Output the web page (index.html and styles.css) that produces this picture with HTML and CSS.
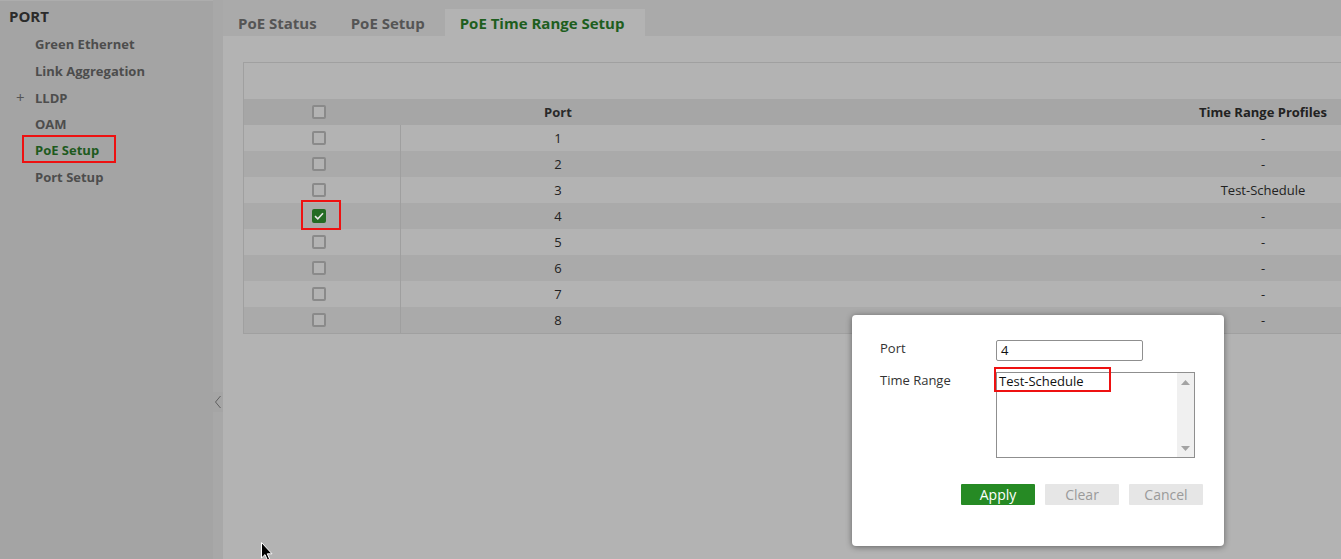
FILE: index.html
```html
<!DOCTYPE html>
<html>
<head>
<meta charset="utf-8">
<link rel="stylesheet" href="styles.css">
</head>
<body>
<div class="app">
  <aside class="sidebar">
    <div class="side-title">PORT</div>
    <ul class="side-list">
      <li class="side-item">Green Ethernet</li>
      <li class="side-item">Link Aggregation</li>
      <li class="side-item has-plus"><span class="plus">+</span>LLDP</li>
      <li class="side-item">OAM</li>
      <li class="side-item"><span class="side-active">PoE Setup</span></li>
      <li class="side-item">Port Setup</li>
    </ul>
  </aside>
  <div class="collapse">
    <div class="collapse-btn">
      <svg width="8" height="14" viewBox="0 0 8 14"><path d="M6.5 1 L1.5 7 L6.5 13" fill="none" stroke="#5f5f5f" stroke-width="1"/></svg>
    </div>
  </div>
  <main class="main">
    <nav class="tabs">
      <div class="tab">PoE Status</div>
      <div class="tab">PoE Setup</div>
      <div class="tab tab-active">PoE Time Range Setup</div>
    </nav>
    <section class="panel">
      <div class="table">
        <div class="toolbar"></div>
        <div class="row head">
          <div class="c-chk"><span class="chk"></span></div>
          <div class="c-port">Port</div>
          <div class="c-fill"></div>
          <div class="c-prof">Time Range Profiles</div>
        </div>
        <div class="row odd"><div class="c-chk sep"><span class="chk"></span></div><div class="c-port">1</div><div class="c-fill"></div><div class="c-prof">-</div></div>
        <div class="row even"><div class="c-chk sep"><span class="chk"></span></div><div class="c-port">2</div><div class="c-fill"></div><div class="c-prof">-</div></div>
        <div class="row odd"><div class="c-chk sep"><span class="chk"></span></div><div class="c-port">3</div><div class="c-fill"></div><div class="c-prof">Test-Schedule</div></div>
        <div class="row even"><div class="c-chk sep"><span class="chk checked"><svg width="10" height="8" viewBox="0 0 10 8"><path d="M1 4.2 L3.8 6.8 L9 1.2" fill="none" stroke="#e8e8e8" stroke-width="1.6"/></svg></span><span class="mark mark-chk"></span></div><div class="c-port">4</div><div class="c-fill"></div><div class="c-prof">-</div></div>
        <div class="row odd"><div class="c-chk sep"><span class="chk"></span></div><div class="c-port">5</div><div class="c-fill"></div><div class="c-prof">-</div></div>
        <div class="row even"><div class="c-chk sep"><span class="chk"></span></div><div class="c-port">6</div><div class="c-fill"></div><div class="c-prof">-</div></div>
        <div class="row odd"><div class="c-chk sep"><span class="chk"></span></div><div class="c-port">7</div><div class="c-fill"></div><div class="c-prof">-</div></div>
        <div class="row even"><div class="c-chk sep"><span class="chk"></span></div><div class="c-port">8</div><div class="c-fill"></div><div class="c-prof">-</div></div>
      </div>
    </section>
  </main>
</div>

<div class="modal">
  <div class="form">
    <label class="lbl lbl-port">Port</label>
    <div class="input">4</div>
    <label class="lbl">Time Range</label>
    <div class="listbox">
      <div class="list-items">
        <div class="list-item">Test-Schedule<span class="mark mark-list"></span></div>
      </div>
      <div class="scroll">
        <svg width="9" height="5" viewBox="0 0 9 5"><path d="M0 5 L4.5 0 L9 5 Z" fill="#a3a3a3"/></svg>
        <svg width="9" height="5" viewBox="0 0 9 5"><path d="M0 0 L4.5 5 L9 0 Z" fill="#a3a3a3"/></svg>
      </div>
    </div>
  </div>
  <div class="buttons">
    <button class="btn btn-apply">Apply</button>
    <button class="btn btn-off">Clear</button>
    <button class="btn btn-off">Cancel</button>
  </div>
</div>

<svg class="cursor" width="13" height="20" viewBox="0 0 13 20">
  <path d="M0.5 0.5 L0.5 16 L4 12.6 L6.6 18.5 L8.8 17.5 L6.3 11.8 L11 11.8 Z" fill="#000" stroke="#fff" stroke-width="1"/>
</svg>
</body>
</html>
```

FILE: styles.css
```css
* { box-sizing: border-box; }
html, body {
  margin: 0;
  padding: 0;
}
body {
  width: 1341px;
  height: 559px;
  overflow: hidden;
  position: relative;
  background: #aaaaaa;
  font-family: "Open Sans", "Liberation Sans", sans-serif;
  color: #222;
}
.app {
  display: flex;
  height: 559px;
}

/* Sidebar */
.sidebar {
  width: 213px;
  flex: none;
  background: #a4a4a4;
  border-top: 1px solid #adadad;
  padding-top: 4px;
}
.side-title {
  padding-left: 9px;
  height: 22px;
  line-height: 22px;
  font-size: 15px;
  font-weight: 700;
  color: #2b2b2b;
}
.side-list {
  list-style: none;
  margin: 4px 0 0 0;
  padding: 0 0 0 35px;
}
.side-item {
  position: relative;
  height: 26.6px;
  line-height: 26.6px;
  font-size: 13px;
  font-weight: 700;
  color: #4d4d4d;
}
.has-plus { margin-top: 1px; margin-bottom: -1px; }
.plus {
  position: absolute;
  left: -19px;
  top: -1px;
  font-weight: 400;
  font-size: 15px;
  color: #555;
}
.side-active {
  display: inline-block;
  color: #1e5a1e;
  border: 2px solid #ee1111;
  margin-left: -13px;
  padding: 0 15px 0 11px;
  height: 28px;
  line-height: 26px;
  margin-top: -2px;
}

/* collapse strip */
.collapse {
  width: 10px;
  flex: none;
  background: #a8a8a8;
  padding-top: 392px;
}
.collapse-btn {
  height: 20px;
  background: #a5a5a5;
  display: flex;
  align-items: center;
  justify-content: center;
}

/* main */
.main {
  flex: 1;
  display: flex;
  flex-direction: column;
  min-width: 0;
}
.tabs {
  height: 36px;
  display: flex;
  align-items: flex-end;
  padding-left: 15px;
  background: #aaaaaa;
}
.tab {
  height: 27px;
  line-height: 28px;
  font-size: 15px;
  font-weight: 700;
  color: #555;
  margin-right: 34px;
  white-space: nowrap;
}
.tab:nth-child(2) { margin-right: 20px; }
.tab-active {
  background: #b3b3b3;
  color: #1e5e1e;
  padding: 0 14px 0 15px;
  min-width: 200px;
}
.panel {
  flex: 1;
  background: #b3b3b3;
  padding: 26px 0 0 20px;
}
.table {
  border: 1px solid #a0a0a0;
  border-right: none;
  width: 1100px;
}
.toolbar {
  height: 36px;
  background: #b3b3b3;
}
.row {
  display: grid;
  grid-template-columns: 157px 314px 1fr 160px;
  height: 26px;
  font-size: 13px;
}
.row > div {
  display: flex;
  align-items: center;
  justify-content: center;
}
.row > .c-chk { padding-right: 7px; }
.head {
  background: #a6a6a6;
  font-weight: 700;
  color: #2a2a2a;
}
.odd { background: #b3b3b3; }
.even { background: #aaaaaa; }
.sep { border-right: 1px solid #9f9f9f; position: relative; }
.c-prof { color: #222; }

.chk {
  width: 14px;
  height: 14px;
  border: 2px solid #8a8a8a;
  border-radius: 2px;
  background: #b3b3b3;
  display: flex;
  align-items: center;
  justify-content: center;
}
.checked {
  background: #236b23;
  border-color: #236b23;
}
.mark {
  position: absolute;
  border: 2px solid #ee1111;
}
.mark-chk {
  left: 57px;
  top: -3px;
  width: 40px;
  height: 30px;
}

/* modal */
.modal {
  position: absolute;
  left: 852px;
  top: 315px;
  width: 372px;
  height: 231px;
  background: #fff;
  border-radius: 4px;
  box-shadow: 0 1px 6px rgba(0,0,0,0.45);
  padding: 25px 21px 0 28px;
  font-family: "Open Sans", "Liberation Sans", sans-serif;
}
.form {
  display: grid;
  grid-template-columns: 116px 199px;
  row-gap: 11px;
}
.lbl {
  font-size: 13px;
  color: #333;
  line-height: 16px;
}
.input {
  width: 147px;
  height: 21px;
  border: 1px solid #8f8f8f;
  border-radius: 2px;
  font-size: 13px;
  line-height: 19px;
  padding-left: 4px;
  color: #111;
}
.listbox {
  height: 86px;
  border: 1px solid #8f8f8f;
  display: flex;
}
.list-items {
  flex: 1;
  padding: 0 0 0 2px;
}
.list-item {
  position: relative;
  font-size: 13px;
  line-height: 16px;
  color: #111;
}
.mark-list {
  left: -5px;
  top: -6px;
  width: 117px;
  height: 25px;
}
.scroll {
  width: 17px;
  background: #f0f0f0;
  display: flex;
  flex-direction: column;
  justify-content: space-between;
  align-items: center;
  padding: 7px 0 6px;
}
.buttons {
  display: flex;
  justify-content: flex-end;
  gap: 10px;
  margin-top: 26px;
}
.btn {
  width: 74px;
  height: 21px;
  border: none;
  border-radius: 1px;
  font-family: "Open Sans", "Liberation Sans", sans-serif;
  font-size: 14px;
  padding: 0;
}
.btn-apply {
  background: #268a24;
  color: #fff;
}
.btn-off {
  background: #e6e6e6;
  color: #9a9a9a;
}

.cursor {
  position: absolute;
  left: 261px;
  top: 542px;
}
```
